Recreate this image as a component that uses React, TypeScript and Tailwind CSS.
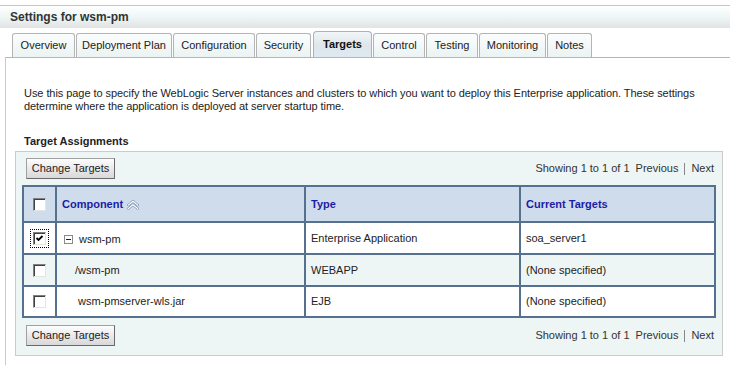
import React from "react";

const tabs = [
  { label: "Overview", w: "w-[63px]", active: false },
  { label: "Deployment Plan", w: "w-[96px]", active: false },
  { label: "Configuration", w: "w-[82px]", active: false },
  { label: "Security", w: "w-[55px]", active: false },
  { label: "Targets", w: "w-[59px] ml-[1px]", active: true },
  { label: "Control", w: "w-[52px]", active: false },
  { label: "Testing", w: "w-[52px]", active: false },
  { label: "Monitoring", w: "w-[67px]", active: false },
  { label: "Notes", w: "w-[45px]", active: false },
];

const rows = [
  { name: "wsm-pm", type: "Enterprise Application", target: "soa_server1", checked: true, pad: "pl-[7px]", tree: true, bg: "bg-white" },
  { name: "/wsm-pm", type: "WEBAPP", target: "(None specified)", checked: false, pad: "pl-[18px]", tree: false, bg: "bg-[#eef5f5]" },
  { name: "wsm-pmserver-wls.jar", type: "EJB", target: "(None specified)", checked: false, pad: "pl-[21px]", tree: false, bg: "bg-white" },
];

const CheckBox = ({ checked }: { checked: boolean }) => (
  <span className="flex items-center justify-center w-[13px] h-[13px] bg-white border border-t-[#808080] border-l-[#808080] border-b-[#e4e4e4] border-r-[#e4e4e4] shadow-[inset_1px_1px_0_#404040]">
    {checked && (
      <svg width="9" height="9" viewBox="0 0 9 9">
        <path d="M1.5 4 L3.5 6 L7.5 2" fill="none" stroke="#000" strokeWidth="1.8" />
      </svg>
    )}
  </span>
);

const Button = () => (
  <button className="h-[21px] w-[89px] border border-[#a0a0a0] border-b-[#6a6a6a] border-r-[#6a6a6a] bg-gradient-to-b from-[#fdfdfd] to-[#d8d8d8] text-[11px] text-[#222] leading-none">
    Change Targets
  </button>
);

const Pager = () => (
  <div className="flex items-center text-[11px] text-[#333] whitespace-nowrap">
    <span>Showing 1 to 1 of 1</span>
    <span className="ml-[6px]">Previous</span>
    <span className="mx-[6px] w-px h-[12px] bg-[#888]"></span>
    <span>Next</span>
  </div>
);

const SortIcon = () => (
  <svg width="14" height="11" viewBox="0 0 14 11" className="ml-[3px]">
    <path d="M1 6 L7 1 L13 6 L11.5 7 L7 3.5 L2.5 7 Z" fill="#fff" stroke="#8ea3c2" strokeWidth="1" />
    <path d="M1 9.5 L7 4.5 L13 9.5 L11.5 10.5 L7 7 L2.5 10.5 Z" fill="#fff" stroke="#8ea3c2" strokeWidth="1" />
  </svg>
);

export default function App() {
  return (
    <div className="w-[730px] h-[366px] bg-white overflow-hidden font-['Liberation_Sans',Arial,sans-serif] text-[11px] text-[#222]">
      <div className="pt-[5px]">
        <div className="h-[23px] border-t border-[#c6c6c6] bg-gradient-to-b from-white via-[#eef6f6] to-[#e2e2e2] pl-[10px] flex items-center">
          <span className="text-[12px] font-bold text-[#333]">Settings for wsm-pm</span>
        </div>
      </div>

      <div className="h-[29px] flex items-end gap-[1px] pl-[12px]">
        {tabs.map((t) =>
          t.active ? (
            <div
              key={t.label}
              className={`${t.w} h-[26px] flex items-center justify-center rounded-t-[4px] border border-b-0 border-[#9db2d4] bg-gradient-to-b from-[#f2f6f8] via-[#e0e6ea] to-[#dde9f2] font-bold text-[11px] text-[#111]`}
            >
              {t.label}
            </div>
          ) : (
            <div
              key={t.label}
              className={`${t.w} h-[24px] flex items-center justify-center rounded-t-[3px] border border-b-0 border-[#b4b4b4] bg-gradient-to-b from-[#fbfdfd] to-[#ebf3f3] text-[11px] text-[#222]`}
            >
              {t.label}
            </div>
          )
        )}
      </div>

      <div className="ml-[5px] h-[308px] border-t border-t-[#a4b7d8] border-l border-l-[#cacaca]">
        <p className="pt-[29px] pl-[18px] leading-[13px] whitespace-nowrap tracking-[-0.06px]">
          Use this page to specify the WebLogic Server instances and clusters to which you want to deploy this Enterprise application. These settings
          <br />
          determine where the application is deployed at server startup time.
        </p>

        <div className="mt-[22px] pl-[18px] leading-[13px] font-bold">Target Assignments</div>

        <div className="mt-[3px] ml-[9px] w-[708px] border border-[#cbcbcb] bg-[#eef5f5] pt-[6px] pb-[9px]">
          <div className="flex items-center justify-between pl-[10px] pr-[8px]">
            <Button />
            <Pager />
          </div>

          <div className="mt-[6px] ml-[6px] w-[694px] bg-[#56708f] p-[2px] grid grid-cols-[31px_247px_213px_193px] grid-rows-[34px_30px_30px_29px] gap-[2px]">
            <div className="bg-[#cfdcec] flex items-center justify-center">
              <CheckBox checked={false} />
            </div>
            <div className="bg-[#cfdcec] flex items-center pl-[5px] font-bold text-[#1c1ca4]">
              Component
              <SortIcon />
            </div>
            <div className="bg-[#cfdcec] flex items-center pl-[5px] font-bold text-[#1c1ca4]">Type</div>
            <div className="bg-[#cfdcec] flex items-center pl-[5px] font-bold text-[#1c1ca4]">Current Targets</div>

            {rows.map((r) => (
              <React.Fragment key={r.name}>
                <div className={`${r.bg} flex items-center justify-center`}>
                  {r.checked ? (
                    <span className="flex items-center justify-center w-[19px] h-[19px] outline outline-1 outline-dotted outline-black -outline-offset-1">
                      <CheckBox checked />
                    </span>
                  ) : (
                    <CheckBox checked={false} />
                  )}
                </div>
                <div className={`${r.bg} ${r.pad} flex items-center`}>
                  {r.tree && (
                    <span className="mt-[3px] mr-[6px] flex items-center justify-center w-[9px] h-[9px] border border-[#8a8a8a] bg-white">
                      <span className="w-[5px] h-px bg-[#222]"></span>
                    </span>
                  )}
                  <span className={r.tree ? "mt-[3px]" : ""}>{r.name}</span>
                </div>
                <div className={`${r.bg} flex items-center pl-[5px]`}>{r.type}</div>
                <div className={`${r.bg} flex items-center pl-[5px]`}>{r.target}</div>
              </React.Fragment>
            ))}
          </div>

          <div className="mt-[7px] flex items-center justify-between pl-[10px] pr-[8px]">
            <Button />
            <Pager />
          </div>
        </div>
      </div>
    </div>
  );
}
